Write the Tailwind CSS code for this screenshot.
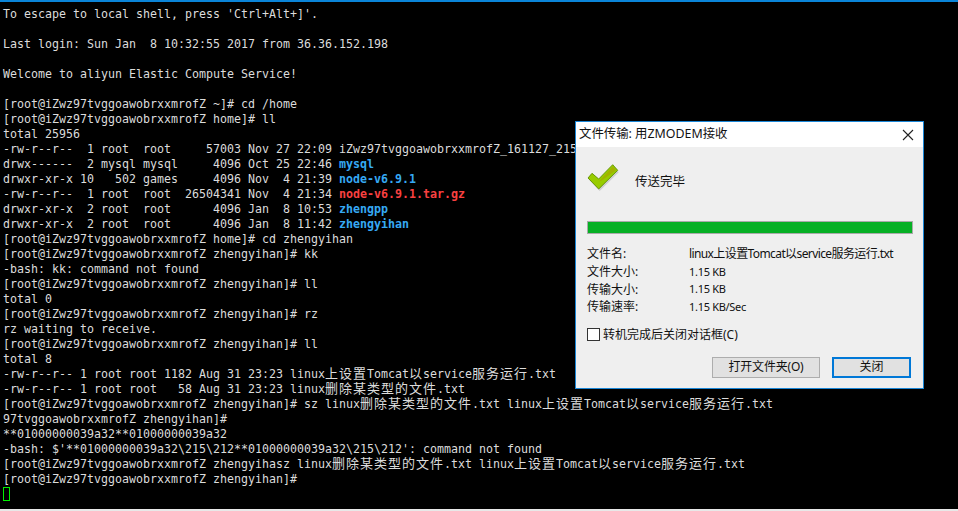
<!DOCTYPE html>
<html><head><meta charset="utf-8"><script src="https://cdn.jsdelivr.net/npm/@tailwindcss/browser@4"></script></head>
<body class="m-0 bg-black">
<div class="relative w-[958px] h-[511px] overflow-hidden bg-black flex flex-col">
<div class="h-[2px] bg-[#0a84d8] shrink-0"></div>
<div class="flex-1 pl-[3px] pt-[5px] font-['DejaVu_Sans_Mono','Noto_Sans_CJK_SC',monospace] text-[11.64px] leading-[15px] text-[#dcdcdc] [&>div]:whitespace-pre [&>div]:h-[15px]">
<div>To escape to local shell, press 'Ctrl+Alt+]'.</div>
<div>&nbsp;</div>
<div>Last login: Sun Jan  8 10:32:55 2017 from 36.36.152.198</div>
<div>&nbsp;</div>
<div>Welcome to aliyun Elastic Compute Service!</div>
<div>&nbsp;</div>
<div>[root@iZwz97tvggoawobrxxmrofZ ~]# cd /home</div>
<div>[root@iZwz97tvggoawobrxxmrofZ home]# ll</div>
<div>total 25956</div>
<div>-rw-r--r--  1 root  root     57003 Nov 27 22:09 iZwz97tvggoawobrxxmrofZ_161127_215</div>
<div>drwx------  2 mysql mysql     4096 Oct 25 22:46 <b class="text-[#36a9f4]">mysql</b></div>
<div>drwxr-xr-x 10   502 games     4096 Nov  4 21:39 <b class="text-[#36a9f4]">node-v6.9.1</b></div>
<div>-rw-r--r--  1 root  root  26504341 Nov  4 21:34 <b class="text-[#f94040]">node-v6.9.1.tar.gz</b></div>
<div>drwxr-xr-x  2 root  root      4096 Jan  8 10:53 <b class="text-[#36a9f4]">zhengpp</b></div>
<div>drwxr-xr-x  2 root  root      4096 Jan  8 11:42 <b class="text-[#36a9f4]">zhengyihan</b></div>
<div>[root@iZwz97tvggoawobrxxmrofZ home]# cd zhengyihan</div>
<div>[root@iZwz97tvggoawobrxxmrofZ zhengyihan]# kk</div>
<div>-bash: kk: command not found</div>
<div>[root@iZwz97tvggoawobrxxmrofZ zhengyihan]# ll</div>
<div>total 0</div>
<div>[root@iZwz97tvggoawobrxxmrofZ zhengyihan]# rz</div>
<div>rz waiting to receive.</div>
<div>[root@iZwz97tvggoawobrxxmrofZ zhengyihan]# ll</div>
<div>total 8</div>
<div>-rw-r--r-- 1 root root 1182 Aug 31 23:23 linux<span class="text-[13px] tracking-[1px] leading-none">上设置</span>Tomcat<span class="text-[13px] tracking-[1px] leading-none">以</span>service<span class="text-[13px] tracking-[1px] leading-none">服务运行</span>.txt</div>
<div>-rw-r--r-- 1 root root   58 Aug 31 23:23 linux<span class="text-[13px] tracking-[1px] leading-none">删除某类型的文件</span>.txt</div>
<div>[root@iZwz97tvggoawobrxxmrofZ zhengyihan]# sz linux<span class="text-[13px] tracking-[1px] leading-none">删除某类型的文件</span>.txt linux<span class="text-[13px] tracking-[1px] leading-none">上设置</span>Tomcat<span class="text-[13px] tracking-[1px] leading-none">以</span>service<span class="text-[13px] tracking-[1px] leading-none">服务运行</span>.txt</div>
<div>97tvggoawobrxxmrofZ zhengyihan]#</div>
<div>**01000000039a32**01000000039a32</div>
<div>-bash: $'**01000000039a32\215\212**01000000039a32\215\212': command not found</div>
<div>[root@iZwz97tvggoawobrxxmrofZ zhengyihasz linux<span class="text-[13px] tracking-[1px] leading-none">删除某类型的文件</span>.txt linux<span class="text-[13px] tracking-[1px] leading-none">上设置</span>Tomcat<span class="text-[13px] tracking-[1px] leading-none">以</span>service<span class="text-[13px] tracking-[1px] leading-none">服务运行</span>.txt</div>
<div>[root@iZwz97tvggoawobrxxmrofZ zhengyihan]#</div>
<div><div class="w-[7px] h-[14px] border border-[#00f000]"></div></div>
</div>
<div class="h-[2px] bg-[#e8e8e8] shrink-0"></div>

<div class="absolute left-[575px] top-[121px] w-[349px] h-[268px] border border-[#1a86d6] bg-[#efefef] flex flex-col font-['Noto_Sans','Noto_Sans_CJK_SC',sans-serif] text-[12px] text-[#111]">
  <div class="h-[25px] bg-white flex items-center justify-between pl-[3px] pr-[8px] shrink-0">
    <span class="text-[12.4px]">文件传输: 用ZMODEM接收</span>
    <svg width="12" height="12" viewBox="0 0 12 12" class="mr-[1px]"><path d="M1 1L11 11M11 1L1 11" stroke="#222" stroke-width="1.1" fill="none"/></svg>
  </div>
  <div class="flex-1 flex flex-col pl-[11px] pr-[10px]">
    <div class="flex h-[48px] mt-[10px]">
      <svg width="32" height="28" viewBox="0 0 32 28" class="mt-[6px] shrink-0">
        <path d="M2 16.5L6 12L12.7 18L26.7 3.7L31.7 9.3L12.7 28Z" fill="#b8b8b8" opacity="0.6"/>
        <path d="M1 15L5 10.3L11.7 16L25.7 1.7L30.7 7.3L11.7 26Z" fill="#98cc00" stroke="#5f8f00" stroke-width="0.9"/>
        <path d="M12 18.5L25.7 3.6L29 7.3L14.5 17.5Z" fill="#a3b200"/>
      </svg>
      <span class="ml-[16px] text-[12.5px] mt-[16px]">传送完毕</span>
    </div>
    <div class="mt-[16px] h-[13px] border border-[#aaa] bg-[#06b025] shrink-0"></div>
    <div class="mt-[11px] grid grid-cols-[102px_1fr] auto-rows-[17.7px] items-center leading-[17px]">
      <span>文件名:</span><span class="tracking-[-0.6px] -mt-[1px]">linux上设置Tomcat以service服务运行.txt</span>
      <span>文件大小:</span><span class="text-[11px] tracking-[-0.3px] -mt-[1px]">1.15 KB</span>
      <span>传输大小:</span><span class="text-[11px] tracking-[-0.3px] -mt-[1px]">1.15 KB</span>
      <span>传输速率:</span><span class="text-[11px] tracking-[-0.3px] -mt-[1px]">1.15 KB/Sec</span>
    </div>
    <div class="mt-[12px] flex items-center gap-[3px] h-[14px]">
      <div class="w-[13px] h-[13px] border border-[#333] bg-white"></div>
      <span>转机完成后关闭对话框(C)</span>
    </div>
    <div class="mt-[15px] flex justify-end gap-[12px] pr-[2px]">
      <div class="w-[108px] h-[21px] border border-[#adadad] bg-[#e1e1e1] flex items-center justify-center tracking-[-0.2px]">打开文件夹(O)</div>
      <div class="w-[79px] h-[21px] border-2 border-[#0078d7] bg-[#e1e1e1] flex items-center justify-center">关闭</div>
    </div>
  </div>
</div>
</div>
</body></html>
